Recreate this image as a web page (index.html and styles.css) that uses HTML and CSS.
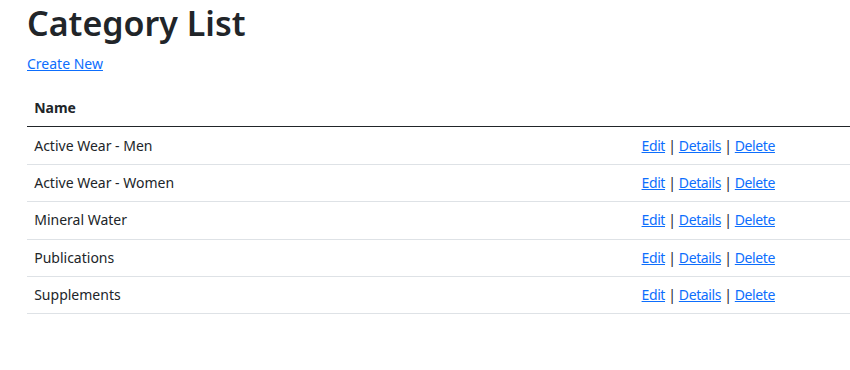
FILE: index.html
```html
<!DOCTYPE html>
<html lang="en">
<head>
    <meta charset="UTF-8">
    <meta name="viewport" content="width=device-width, initial-scale=1.0">
    <title>Category List</title>
    <link rel="stylesheet" href="styles.css">
</head>
<body>
    <main class="container">
        <h1>Category List</h1>
        <p><a href="#">Create New</a></p>

        <table class="table">
            <thead>
                <tr>
                    <th class="col-name">Name</th>
                    <th></th>
                </tr>
            </thead>
            <tbody>
                <tr>
                    <td>Active Wear - Men</td>
                    <td class="actions"><a href="#">Edit</a> | <a href="#">Details</a> | <a href="#">Delete</a></td>
                </tr>
                <tr>
                    <td>Active Wear - Women</td>
                    <td class="actions"><a href="#">Edit</a> | <a href="#">Details</a> | <a href="#">Delete</a></td>
                </tr>
                <tr>
                    <td>Mineral Water</td>
                    <td class="actions"><a href="#">Edit</a> | <a href="#">Details</a> | <a href="#">Delete</a></td>
                </tr>
                <tr>
                    <td>Publications</td>
                    <td class="actions"><a href="#">Edit</a> | <a href="#">Details</a> | <a href="#">Delete</a></td>
                </tr>
                <tr>
                    <td>Supplements</td>
                    <td class="actions"><a href="#">Edit</a> | <a href="#">Details</a> | <a href="#">Delete</a></td>
                </tr>
            </tbody>
        </table>
    </main>
</body>
</html>
```

FILE: styles.css
```css
body {
    font-family: "Noto Sans", "Open Sans", sans-serif;
    font-size: 14px;
    line-height: 22px;
    color: #212529;
    background-color: #fff;
    margin: 0;
}
.container {
    padding: 3px 0 0 27px;
}
h1 {
    font-size: 34px;
    font-weight: 600;
    line-height: 41px;
    margin: 0 0 9px 0;
}
p {
    margin: 0 0 15px 0;
}
a {
    color: #0d6efd;
    text-decoration: underline;
}
.table {
    width: 100%;
    border-collapse: collapse;
}
.table th,
.table td {
    padding: 7.2px;
    text-align: left;
    vertical-align: top;
    border-bottom: 1px solid #dee2e6;
}
.table thead th {
    font-weight: bold;
    border-bottom: 1px solid #212529;
}
.col-name {
    width: 593px;
}
.actions {
    letter-spacing: -0.4px;
}
```
